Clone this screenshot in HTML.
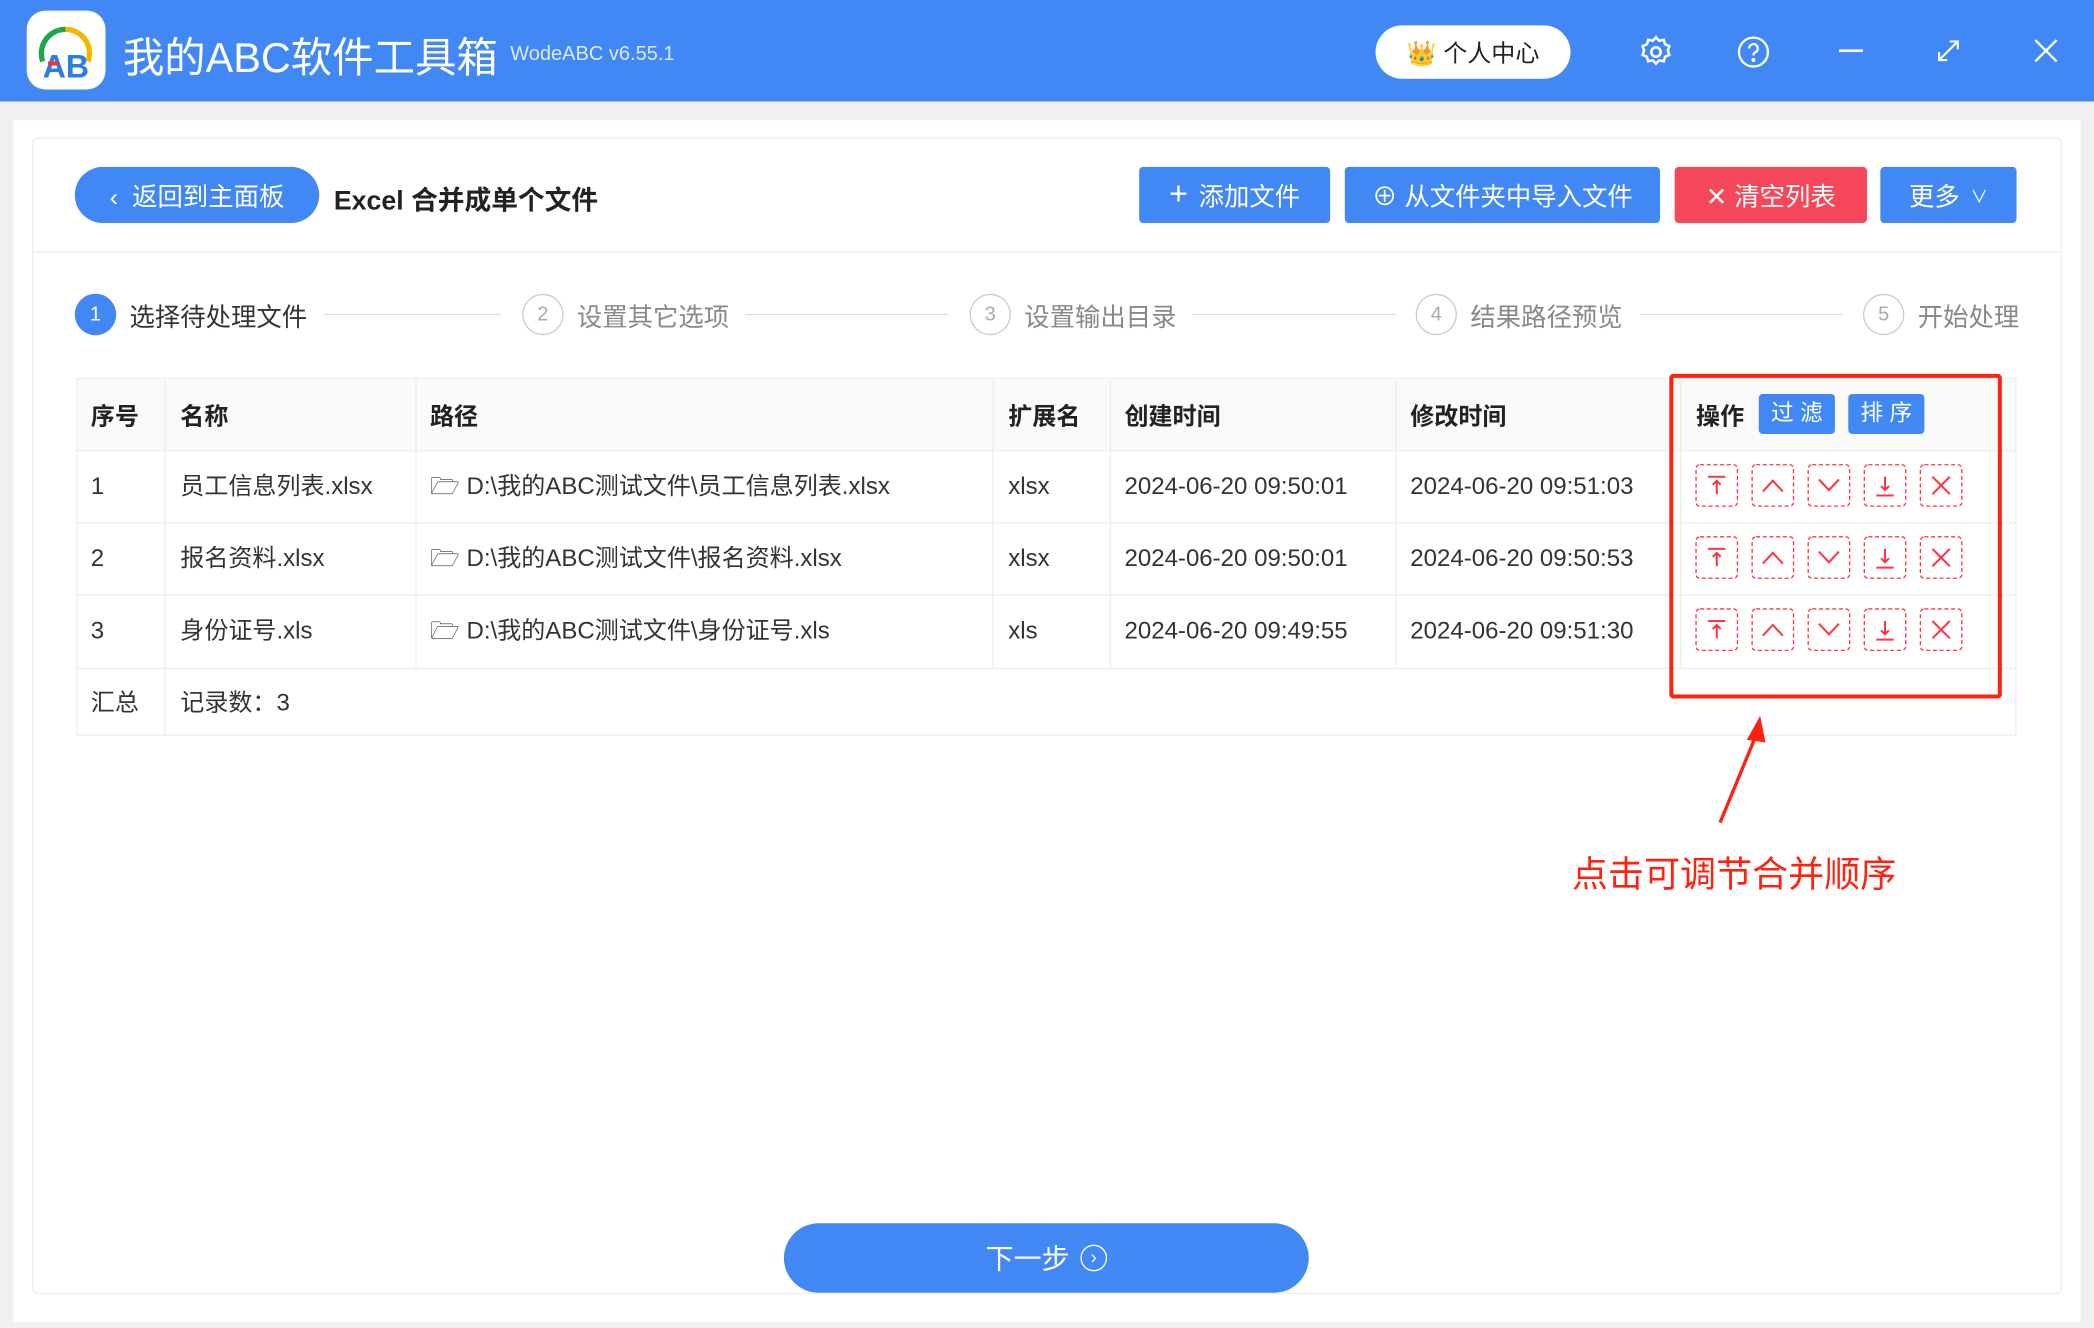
<!DOCTYPE html>
<html><head><meta charset="utf-8"><style>
*{box-sizing:border-box;margin:0;padding:0}
body{width:2094px;height:1328px;overflow:hidden;background:#f2f2f2;font-family:"Liberation Sans","Noto Sans CJK SC",sans-serif}
#s{width:1568px;height:994px;transform:scale(1.33546);transform-origin:0 0;position:relative;background:#f0f0f0}
.a{position:absolute}
.bar{left:0;top:0;width:1568px;height:76px;background:#4288f5}
.btn{position:absolute;top:125px;height:42px;border-radius:3px;color:#fff;font-size:19px;display:flex;align-items:center;justify-content:center;gap:8px}
.th{position:absolute;font-weight:bold;font-size:18px;color:#222}
.td{position:absolute;font-size:18px;color:#333;line-height:22px;height:22px;white-space:nowrap}
.step{position:absolute;top:220px;width:31px;height:31px;border-radius:50%;border:1px solid #ccc;color:#aaa;font-size:15px;display:flex;align-items:center;justify-content:center}
.sl{position:absolute;top:223px;font-size:19px;color:#888}
.line{position:absolute;top:235px;height:1px;background:#ddd}
</style></head><body><div id="s">
<div class="a bar"></div>
<div class="a" style="left:20px;top:8px;width:59px;height:59px;background:#fff;border-radius:14px"></div>
<svg class="a" style="left:20px;top:8px" width="59" height="59" viewBox="0 0 59 59"><path d="M12 38 A18 18 0 0 1 29 14" stroke="#1fa54a" stroke-width="4" fill="none"/><path d="M29 14 A18 18 0 0 1 46 38" stroke="#f7b500" stroke-width="4" fill="none"/><text x="12" y="50" font-size="24" font-family="Liberation Sans" fill="#2a7de1" font-weight="bold">AB</text><rect x="16" y="38" width="8" height="3" fill="#e33"/></svg>
<div class="a" style="left:92px;top:18px;font-size:31px;color:#fff">我的ABC软件工具箱</div>
<div class="a" style="left:382px;top:32px;font-size:15px;color:#dce8ff">WodeABC v6.55.1</div>
<div class="a" style="left:1030px;top:19px;width:146px;height:40px;background:#fff;border-radius:20px;font-size:18px;color:#222;display:flex;align-items:center;justify-content:center">👑 个人中心</div>
<svg class="a" style="left:1226px;top:25px" width="28" height="28" viewBox="0 0 24 24" fill="none" stroke="#fff" stroke-width="1.6"><circle cx="12" cy="12" r="3"/><path d="M12 2.5l2 2.2 3-.6.8 2.9 2.8 1.2-1 2.8 1 2.8-2.8 1.2-.8 2.9-3-.6-2 2.2-2-2.2-3 .6-.8-2.9-2.8-1.2 1-2.8-1-2.8 2.8-1.2.8-2.9 3 .6z"/></svg>
<svg class="a" style="left:1300px;top:26px" width="26" height="26" viewBox="0 0 24 24" fill="none" stroke="#fff" stroke-width="1.6"><circle cx="12" cy="12" r="10"/><path d="M9 9.5a3 3 0 1 1 4 2.8c-.8.4-1 1-1 2"/><circle cx="12" cy="17.5" r=".6" fill="#fff"/></svg>
<div class="a" style="left:1377px;top:37px;width:18px;height:2px;background:#fff"></div>
<svg class="a" style="left:1450px;top:29px" width="18" height="18" viewBox="0 0 18 18" stroke="#fff" stroke-width="1.6" fill="none"><path d="M2 16L16 2M10 2h6v6M2 10v6h6"/></svg>
<svg class="a" style="left:1523px;top:29px" width="18" height="18" stroke="#fff" stroke-width="1.8"><path d="M1 1L17 17M17 1L1 17"/></svg>
<div class="a" style="left:10px;top:90px;width:1548px;height:900px;background:#fff"></div>
<div class="a" style="left:24px;top:103px;width:1520px;height:866px;border:1px solid #eee;border-radius:4px;background:#fff"></div>
<div class="btn" style="left:56px;width:183px;border-radius:21px;background:#4288f5">‹&nbsp; 返回到主面板</div>
<div class="a" style="left:250px;top:134px;font-size:20px;font-weight:bold;color:#222">Excel 合并成单个文件</div>
<div class="btn" style="left:853px;width:143px;background:#4288f5"><span style="font-size:24px">+</span> 添加文件</div>
<div class="btn" style="left:1007px;width:236px;background:#4288f5">⊕ 从文件夹中导入文件</div>
<div class="btn" style="left:1254px;width:144px;background:#f5485a">✕ 清空列表</div>
<div class="btn" style="left:1408px;width:102px;background:#4288f5">更多 <span style="font-size:13px">∨</span></div>
<div class="a" style="left:25px;top:188px;width:1518px;height:1px;background:#eee"></div>
<div class="step" style="left:56px;background:#4288f5;border-color:#4288f5;color:#fff">1</div><div class="sl" style="left:97px;color:#333">选择待处理文件</div>
<div class="line" style="left:243px;width:132px"></div>
<div class="step" style="left:391px">2</div><div class="sl" style="left:432px">设置其它选项</div>
<div class="line" style="left:558px;width:152px"></div>
<div class="step" style="left:726px">3</div><div class="sl" style="left:767px">设置输出目录</div>
<div class="line" style="left:893px;width:152px"></div>
<div class="step" style="left:1060px">4</div><div class="sl" style="left:1101px">结果路径预览</div>
<div class="line" style="left:1228px;width:152px"></div>
<div class="step" style="left:1395px">5</div><div class="sl" style="left:1436px">开始处理</div>
<div class="a" style="left:57px;top:283px;width:1453px;height:268px;border:1px solid #eee"></div>
<div class="a" style="left:58px;top:284px;width:1451px;height:53px;background:#fafafa"></div>
<div class="a" style="left:57px;top:337px;width:1453px;height:1px;background:#eee"></div>
<div class="a" style="left:57px;top:391px;width:1453px;height:1px;background:#eee"></div>
<div class="a" style="left:57px;top:445px;width:1453px;height:1px;background:#eee"></div>
<div class="a" style="left:57px;top:500px;width:1453px;height:1px;background:#eee"></div>
<div class="a" style="left:123px;top:283px;width:1px;height:268px;background:#eee"></div>
<div class="a" style="left:311px;top:283px;width:1px;height:217px;background:#eee"></div>
<div class="a" style="left:743px;top:283px;width:1px;height:217px;background:#eee"></div>
<div class="a" style="left:831px;top:283px;width:1px;height:217px;background:#eee"></div>
<div class="a" style="left:1045px;top:283px;width:1px;height:217px;background:#eee"></div>
<div class="a" style="left:1258px;top:283px;width:1px;height:217px;background:#eee"></div>
<div class="th" style="left:68px;top:298px">序号</div><div class="th" style="left:135px;top:298px">名称</div><div class="th" style="left:322px;top:298px">路径</div><div class="th" style="left:755px;top:298px">扩展名</div><div class="th" style="left:842px;top:298px">创建时间</div><div class="th" style="left:1056px;top:298px">修改时间</div><div class="th" style="left:1270px;top:298px">操作</div>
<div class="a" style="left:1317px;top:295px;width:57px;height:30px;background:#4288f5;border-radius:3px;color:#fff;font-size:17px;text-align:center;line-height:30px">过 滤</div>
<div class="a" style="left:1384px;top:295px;width:57px;height:30px;background:#4288f5;border-radius:3px;color:#fff;font-size:17px;text-align:center;line-height:30px">排 序</div>
<div class="td" style="left:68px;top:353px">1</div><div class="td" style="left:135px;top:353px">员工信息列表.xlsx</div><div class="td" style="left:322px;top:353px">🗁 D:\我的ABC测试文件\员工信息列表.xlsx</div><div class="td" style="left:755px;top:353px">xlsx</div><div class="td" style="left:842px;top:353px">2024-06-20 09:50:01</div><div class="td" style="left:1056px;top:353px">2024-06-20 09:51:03</div>
<div class="td" style="left:68px;top:407px">2</div><div class="td" style="left:135px;top:407px">报名资料.xlsx</div><div class="td" style="left:322px;top:407px">🗁 D:\我的ABC测试文件\报名资料.xlsx</div><div class="td" style="left:755px;top:407px">xlsx</div><div class="td" style="left:842px;top:407px">2024-06-20 09:50:01</div><div class="td" style="left:1056px;top:407px">2024-06-20 09:50:53</div>
<div class="td" style="left:68px;top:461px">3</div><div class="td" style="left:135px;top:461px">身份证号.xls</div><div class="td" style="left:322px;top:461px">🗁 D:\我的ABC测试文件\身份证号.xls</div><div class="td" style="left:755px;top:461px">xls</div><div class="td" style="left:842px;top:461px">2024-06-20 09:49:55</div><div class="td" style="left:1056px;top:461px">2024-06-20 09:51:30</div>
<div class="td" style="left:68px;top:515px">汇总</div><div class="td" style="left:135px;top:515px">记录数：3</div>
<svg class="a" style="left:1268px;top:346px" width="205" height="144" fill="none" stroke="#f34" stroke-width="1.5">
<g id="r">
<rect x="2" y="2" width="31" height="31" rx="3" stroke-dasharray="3 2" stroke-width="1"/><path d="M11 11h13M17.5 24v-10M14.5 17l3-3 3 3"/>
<rect x="44" y="2" width="31" height="31" rx="3" stroke-dasharray="3 2" stroke-width="1"/><path d="M52 22l7.5-8 7.5 8"/>
<rect x="86" y="2" width="31" height="31" rx="3" stroke-dasharray="3 2" stroke-width="1"/><path d="M94 13l7.5 8 7.5-8"/>
<rect x="128" y="2" width="31" height="31" rx="3" stroke-dasharray="3 2" stroke-width="1"/><path d="M137 25h13M143.5 11v10M140.5 18l3 3 3-3"/>
<rect x="170" y="2" width="31" height="31" rx="3" stroke-dasharray="3 2" stroke-width="1"/><path d="M179 11l13 13M192 11l-13 13"/>
</g>
<use href="#r" y="54"/><use href="#r" y="108"/>
</svg>
<div class="a" style="left:1250px;top:280px;width:249px;height:243px;border:3px solid #f21;border-radius:3px"></div>
<svg class="a" style="left:1280px;top:530px" width="50" height="95"><path d="M8 86L36 18" stroke="#f21" stroke-width="2.5"/><path d="M38 6L28 24 42 26z" fill="#f21"/></svg>
<div class="a" style="left:1177px;top:633px;font-size:27px;color:#f21">点击可调节合并顺序</div>
<div class="a" style="left:587px;top:916px;width:393px;height:52px;background:#4288f5;border-radius:26px;color:#fff;font-size:21px;display:flex;align-items:center;justify-content:center;gap:8px">下一步 <span style="display:inline-block;width:20px;height:20px;border:1.5px solid #fff;border-radius:50%;font-size:14px;line-height:17px;text-align:center">›</span></div>
</div></body></html>
